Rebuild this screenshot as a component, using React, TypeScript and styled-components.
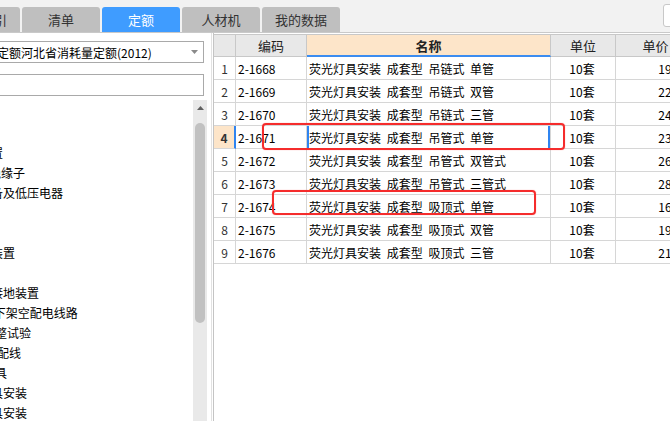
import React from "react";
import styled, { createGlobalStyle } from "styled-components";

const GlobalStyle = createGlobalStyle`
  html, body {
    margin: 0;
    padding: 0;
    overflow: hidden;
    background: #fff;
  }
  body {
    font-family: "Noto Sans CJK SC", "Microsoft YaHei", sans-serif;
    font-size: 12px;
    color: #000;
  }
  * {
    box-sizing: border-box;
  }
`;

const Window = styled.div`
  position: relative;
  width: 670px;
  height: 421px;
  overflow: hidden;
  display: flex;
  flex-direction: column;
  background: #fff;
`;

const TabBar = styled.div`
  display: flex;
  align-items: flex-end;
  height: 33px;
  flex-shrink: 0;
  background: #f2f2f2;
  border-bottom: 1px solid #c9c9c9;
`;

const Tabs = styled.div`
  display: flex;
  gap: 2px;
  margin-left: -58px;
`;

const Tab = styled.div<{ $active?: boolean }>`
  width: 78px;
  height: 25px;
  display: flex;
  align-items: center;
  justify-content: center;
  border-radius: 3px 3px 0 0;
  background: ${(p) => (p.$active ? "#3f9cff" : "#bfbfbf")};
  color: ${(p) => (p.$active ? "#fff" : "#333")};
  font-size: 13px;
  white-space: nowrap;
`;

const SearchBox = styled.div`
  align-self: flex-start;
  margin: 4px -113px 0 auto;
  width: 120px;
  height: 23px;
  background: #fff;
  border: 1px solid #c8c8c8;
  border-radius: 3px;
`;

const Main = styled.div`
  flex: 1;
  min-height: 0;
  display: flex;
`;

const LeftPanel = styled.div`
  width: 212px;
  flex-shrink: 0;
  overflow: hidden;
  border-right: 1px solid #e2e2e2;
`;

// the panel is scrolled to the right, so its left part sits outside the window
const LeftInner = styled.div`
  width: calc(100% + 140px);
  margin-left: -140px;
  height: 100%;
  display: flex;
  flex-direction: column;
`;

const Select = styled.div`
  margin: 8px 7px 0 12px;
  height: 22px;
  flex-shrink: 0;
  display: flex;
  align-items: center;
  padding: 0 5px 0 4px;
  border: 1px solid #a9a9a9;
  background: #fff;
  font-size: 12px;
`;

const SelectText = styled.span`
  flex: 1;
  white-space: nowrap;
  overflow: hidden;
`;

const SearchInput = styled.div`
  margin: 11px 7px 0 12px;
  height: 22px;
  flex-shrink: 0;
  border: 1px solid #a9a9a9;
  background: #fff;
`;

const TreeArea = styled.div`
  flex: 1;
  min-height: 0;
  display: flex;
  margin-top: 4px;
`;

const TreeList = styled.div`
  flex: 1;
  padding-top: 3px;
  overflow: hidden;
`;

const TreeRow = styled.div<{ $indent: number }>`
  height: 20px;
  line-height: 20px;
  padding-left: ${(p) => p.$indent}px;
  white-space: nowrap;
  font-size: 12px;
  color: #000;
`;

const ScrollTrack = styled.div`
  width: 14px;
  margin-right: 4px;
  flex-shrink: 0;
  background: #e9e9e9;
  display: flex;
  flex-direction: column;
  align-items: center;
`;

const ScrollArrow = styled.div`
  height: 16px;
  display: flex;
  align-items: center;
  justify-content: center;
`;

const ScrollThumb = styled.div`
  margin-top: 7px;
  width: 10px;
  height: 200px;
  border-radius: 5px;
  background: #c1c1c1;
`;

const TablePane = styled.div`
  flex: 1;
  min-width: 0;
  margin-left: 1px;
  padding-top: 1px;
  border-left: 1px solid #c4c4c4;
  overflow: hidden;
`;

const Grid = styled.div`
  display: grid;
  grid-template-columns: 22px 71px 244px 65px 80px;
  width: max-content;
  border-top: 1px solid #c8c8c8;
`;

const HeadCell = styled.div<{ $active?: boolean }>`
  height: 22px;
  display: flex;
  align-items: center;
  justify-content: center;
  background: ${(p) => (p.$active ? "#fde5c9" : "#e8e8e8")};
  border-right: 1px solid #c8c8c8;
  border-bottom: ${(p) => (p.$active ? "2px solid #3b8cf0" : "1px solid #c8c8c8")};
  font-size: 13px;
  font-weight: ${(p) => (p.$active ? 700 : 400)};
  color: #222;
`;

const Cell = styled.div<{ $align?: "left" | "center" | "right"; $selected?: boolean }>`
  height: 23px;
  display: flex;
  align-items: center;
  justify-content: ${(p) =>
    p.$align === "center" ? "center" : p.$align === "right" ? "flex-end" : "flex-start"};
  padding: 0 ${(p) => (p.$align === "right" ? 0 : 4)}px 0 2px;
  border-right: 1px solid #d6d6d6;
  border-bottom: 1px solid #d6d6d6;
  white-space: pre;
  word-spacing: 3px;
  overflow: hidden;
  font-size: 12px;
  color: #000;
  box-shadow: ${(p) =>
    p.$selected ? "inset 2px 0 0 #2f84f0, inset -2px 0 0 #2f84f0" : "none"};
`;

const RowNum = styled.div<{ $current?: boolean }>`
  height: 23px;
  display: flex;
  align-items: center;
  justify-content: center;
  background: ${(p) => (p.$current ? "#fde5c9" : "#fff")};
  border-right: ${(p) => (p.$current ? "2px solid #2f84f0" : "1px solid #d6d6d6")};
  border-bottom: 1px solid #d6d6d6;
  font-size: 12px;
  font-weight: ${(p) => (p.$current ? 700 : 400)};
  color: #333;
`;

const Mark = styled.div<{ $left: number; $top: number; $w: number; $h: number }>`
  position: absolute;
  left: ${(p) => p.$left}px;
  top: ${(p) => p.$top}px;
  width: ${(p) => p.$w}px;
  height: ${(p) => p.$h}px;
  border: 2px solid #f52c2c;
  border-radius: 4px;
  box-shadow: 0 0 1px rgba(255, 40, 40, 0.6);
  pointer-events: none;
`;

const tabs = ["清单指引", "清单", "定额", "人材机", "我的数据"];

const tree: { text: string; indent: number }[] = [
  { text: "电气设备安装工程", indent: 8 },
  { text: "变压器", indent: 95 },
  { text: "配电装置", indent: 95 },
  { text: "母线、绝缘子", indent: 93 },
  { text: "控制设备及低压电器", indent: 95 },
  { text: "蓄电池", indent: 95 },
  { text: "电机", indent: 95 },
  { text: "滑触线装置", indent: 95 },
  { text: "电缆", indent: 95 },
  { text: "防雷及接地装置", indent: 95 },
  { text: "10kV以下架空配电线路", indent: 95 },
  { text: "电气调整试验", indent: 99 },
  { text: "配管、配线", indent: 101 },
  { text: "照明器具", indent: 99 },
  { text: "普通灯具安装", indent: 95 },
  { text: "装饰灯具安装", indent: 95 },
  { text: "荧光灯具安装", indent: 95 },
];

const rows = [
  { code: "2-1668", name: "荧光灯具安装 成套型 吊链式 单管", unit: "10套", price: "193.41" },
  { code: "2-1669", name: "荧光灯具安装 成套型 吊链式 双管", unit: "10套", price: "229.55" },
  { code: "2-1670", name: "荧光灯具安装 成套型 吊链式 三管", unit: "10套", price: "243.67" },
  { code: "2-1671", name: "荧光灯具安装 成套型 吊管式 单管", unit: "10套", price: "231.18" },
  { code: "2-1672", name: "荧光灯具安装 成套型 吊管式 双管式", unit: "10套", price: "264.73" },
  { code: "2-1673", name: "荧光灯具安装 成套型 吊管式 三管式", unit: "10套", price: "283.90" },
  { code: "2-1674", name: "荧光灯具安装 成套型 吸顶式 单管", unit: "10套", price: "161.25" },
  { code: "2-1675", name: "荧光灯具安装 成套型 吸顶式 双管", unit: "10套", price: "194.36" },
  { code: "2-1676", name: "荧光灯具安装 成套型 吸顶式 三管", unit: "10套", price: "213.52" },
];

const CURRENT = 3;

export default function App() {
  return (
    <>
      <GlobalStyle />
      <Window>
        <TabBar>
          <Tabs>
            {tabs.map((t) => (
              <Tab key={t} $active={t === "定额"}>
                {t}
              </Tab>
            ))}
          </Tabs>
          <SearchBox />
        </TabBar>
        <Main>
          <LeftPanel>
            <LeftInner>
              <Select>
                <SelectText>全国统一安装工程预算定额河北省消耗量定额(2012)</SelectText>
                <svg width="7" height="4" viewBox="0 0 7 4">
                  <path d="M0 0h7L3.5 4z" fill="#8a8a8a" />
                </svg>
              </Select>
              <SearchInput />
              <TreeArea>
                <TreeList>
                  {tree.map((n) => (
                    <TreeRow key={n.text} $indent={n.indent}>
                      {n.text}
                    </TreeRow>
                  ))}
                </TreeList>
                <ScrollTrack>
                  <ScrollArrow>
                    <svg width="7" height="4" viewBox="0 0 7 4">
                      <path d="M0 4h7L3.5 0z" fill="#606060" />
                    </svg>
                  </ScrollArrow>
                  <ScrollThumb />
                </ScrollTrack>
              </TreeArea>
            </LeftInner>
          </LeftPanel>
          <TablePane>
            <Grid>
              <HeadCell />
              <HeadCell>编码</HeadCell>
              <HeadCell $active>名称</HeadCell>
              <HeadCell>单位</HeadCell>
              <HeadCell>单价</HeadCell>
              {rows.map((r, i) => (
                <React.Fragment key={r.code}>
                  <RowNum $current={i === CURRENT}>{i + 1}</RowNum>
                  <Cell>{r.code}</Cell>
                  <Cell $selected={i === CURRENT}>{r.name}</Cell>
                  <Cell $align="center">{r.unit}</Cell>
                  <Cell $align="right">{r.price}</Cell>
                </React.Fragment>
              ))}
            </Grid>
          </TablePane>
        </Main>
        <Mark $left={262} $top={123} $w={303} $h={27} />
        <Mark $left={272} $top={190} $w={264} $h={25} />
      </Window>
    </>
  );
}
